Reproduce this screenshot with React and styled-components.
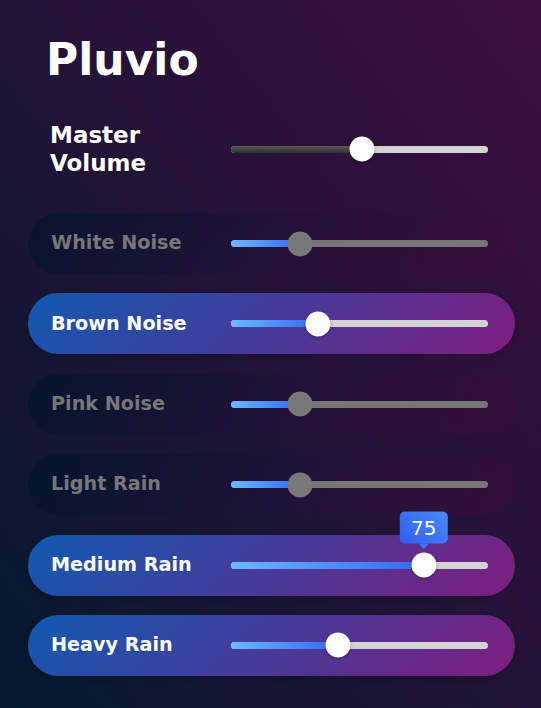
import React from "react";
import styled, { createGlobalStyle } from "styled-components";

const GlobalStyle = createGlobalStyle`
  * { box-sizing: border-box; }
  html, body { margin: 0; padding: 0; }
  body {
    font-family: "DejaVu Sans", "Liberation Sans", sans-serif;
    background: #130f2c;
  }
`;

const Page = styled.div`
  min-height: 708px;
  width: 541px;
  padding: 34px 26px 0 28px;
  background: linear-gradient(to top right, #04192f 0%, #221337 50%, #3d0d41 100%);
  display: flex;
  flex-direction: column;
`;

const Title = styled.h1`
  margin: 0 0 35px 18px;
  font-size: 44px;
  line-height: 52px;
  font-weight: 700;
  color: #ffffff;
`;

const MasterRow = styled.div`
  display: flex;
  align-items: center;
  padding: 0 27px 0 22px;
  margin-bottom: 36px;
`;

const MasterLabel = styled.div`
  flex: 0 0 181px;
  font-size: 23px;
  line-height: 28px;
  font-weight: 700;
  color: #ffffff;
`;

const List = styled.div`
  display: flex;
  flex-direction: column;
  gap: 19.4px;
`;

const Row = styled.div`
  display: flex;
  align-items: center;
  height: 61px;
  padding: 0 27px 0 23px;
  border-radius: 31px;
  background: ${(p) =>
    p.$active
      ? "linear-gradient(135deg, #1159b1 0%, #463b9a 50%, #7f1d7e 100%)"
      : "linear-gradient(135deg, rgba(0, 20, 44, 0.75) 0%, rgba(30, 18, 55, 0.4) 50%, rgba(62, 10, 62, 0.55) 100%)"};
  box-shadow: ${(p) => (p.$active ? "0 2px 6px rgba(0,0,0,0.15)" : "none")};
`;

const Label = styled.div`
  flex: 0 0 180px;
  font-size: 19.2px;
  line-height: 22.4px;
  font-weight: 700;
  color: ${(p) => (p.$active ? "#ffffff" : "#777777")};
  white-space: nowrap;
`;

const Track = styled.div`
  position: relative;
  flex: 1;
  height: 7px;
  border-radius: 4px;
  background: ${(p) =>
    p.$variant === "off" ? "#767676" : "#d3d3d3"};
`;

const Fill = styled.div`
  position: absolute;
  left: 0;
  top: 0;
  bottom: 0;
  border-radius: 4px;
  background: ${(p) =>
    p.$variant === "master"
      ? "linear-gradient(to bottom, #5a5a5a, #2f2f2f)"
      : "linear-gradient(to right, #6cb8ff, #3468f6)"};
`;

const Thumb = styled.div`
  position: absolute;
  top: 50%;
  width: 25px;
  height: 25px;
  border-radius: 50%;
  transform: translate(-50%, -50%);
  background: ${(p) => (p.$variant === "off" ? "#787878" : "#ffffff")};
  box-shadow: ${(p) =>
    p.$variant === "off" ? "none" : "0 1px 3px rgba(0, 0, 0, 0.35)"};
`;

const Tip = styled.div`
  position: absolute;
  left: 50%;
  bottom: calc(100% + 9px);
  transform: translateX(-50%);
  padding: 4px 11px;
  border-radius: 5px;
  background: linear-gradient(45deg, #2d5ff0, #4a8af8);
  color: #ffffff;
  font-size: 20px;
  line-height: 24px;
  font-weight: 400;
  white-space: nowrap;

  &::after {
    content: "";
    position: absolute;
    left: 50%;
    top: 100%;
    transform: translateX(-50%);
    border-left: 5px solid transparent;
    border-right: 5px solid transparent;
    border-top: 6px solid #3a72f3;
  }
`;

function Slider({ value, variant, tip }) {
  return (
    <Track $variant={variant}>
      <Fill $variant={variant} style={{ width: `${value}%` }} />
      <Thumb $variant={variant} style={{ left: `${value}%` }}>
        {tip ? <Tip>{tip}</Tip> : null}
      </Thumb>
    </Track>
  );
}

const sounds = [
  { name: "White Noise", value: 27, active: false },
  { name: "Brown Noise", value: 34, active: true },
  { name: "Pink Noise", value: 27, active: false },
  { name: "Light Rain", value: 27, active: false },
  { name: "Medium Rain", value: 75, active: true, tip: "75" },
  { name: "Heavy Rain", value: 41.5, active: true },
];

export default function App() {
  return (
    <>
      <GlobalStyle />
      <Page>
        <Title>Pluvio</Title>
        <MasterRow>
          <MasterLabel>Master Volume</MasterLabel>
          <Slider value={51} variant="master" />
        </MasterRow>
        <List>
          {sounds.map((s) => (
            <Row key={s.name} $active={s.active}>
              <Label $active={s.active}>{s.name}</Label>
              <Slider
                value={s.value}
                variant={s.active ? "on" : "off"}
                tip={s.tip}
              />
            </Row>
          ))}
        </List>
      </Page>
    </>
  );
}
